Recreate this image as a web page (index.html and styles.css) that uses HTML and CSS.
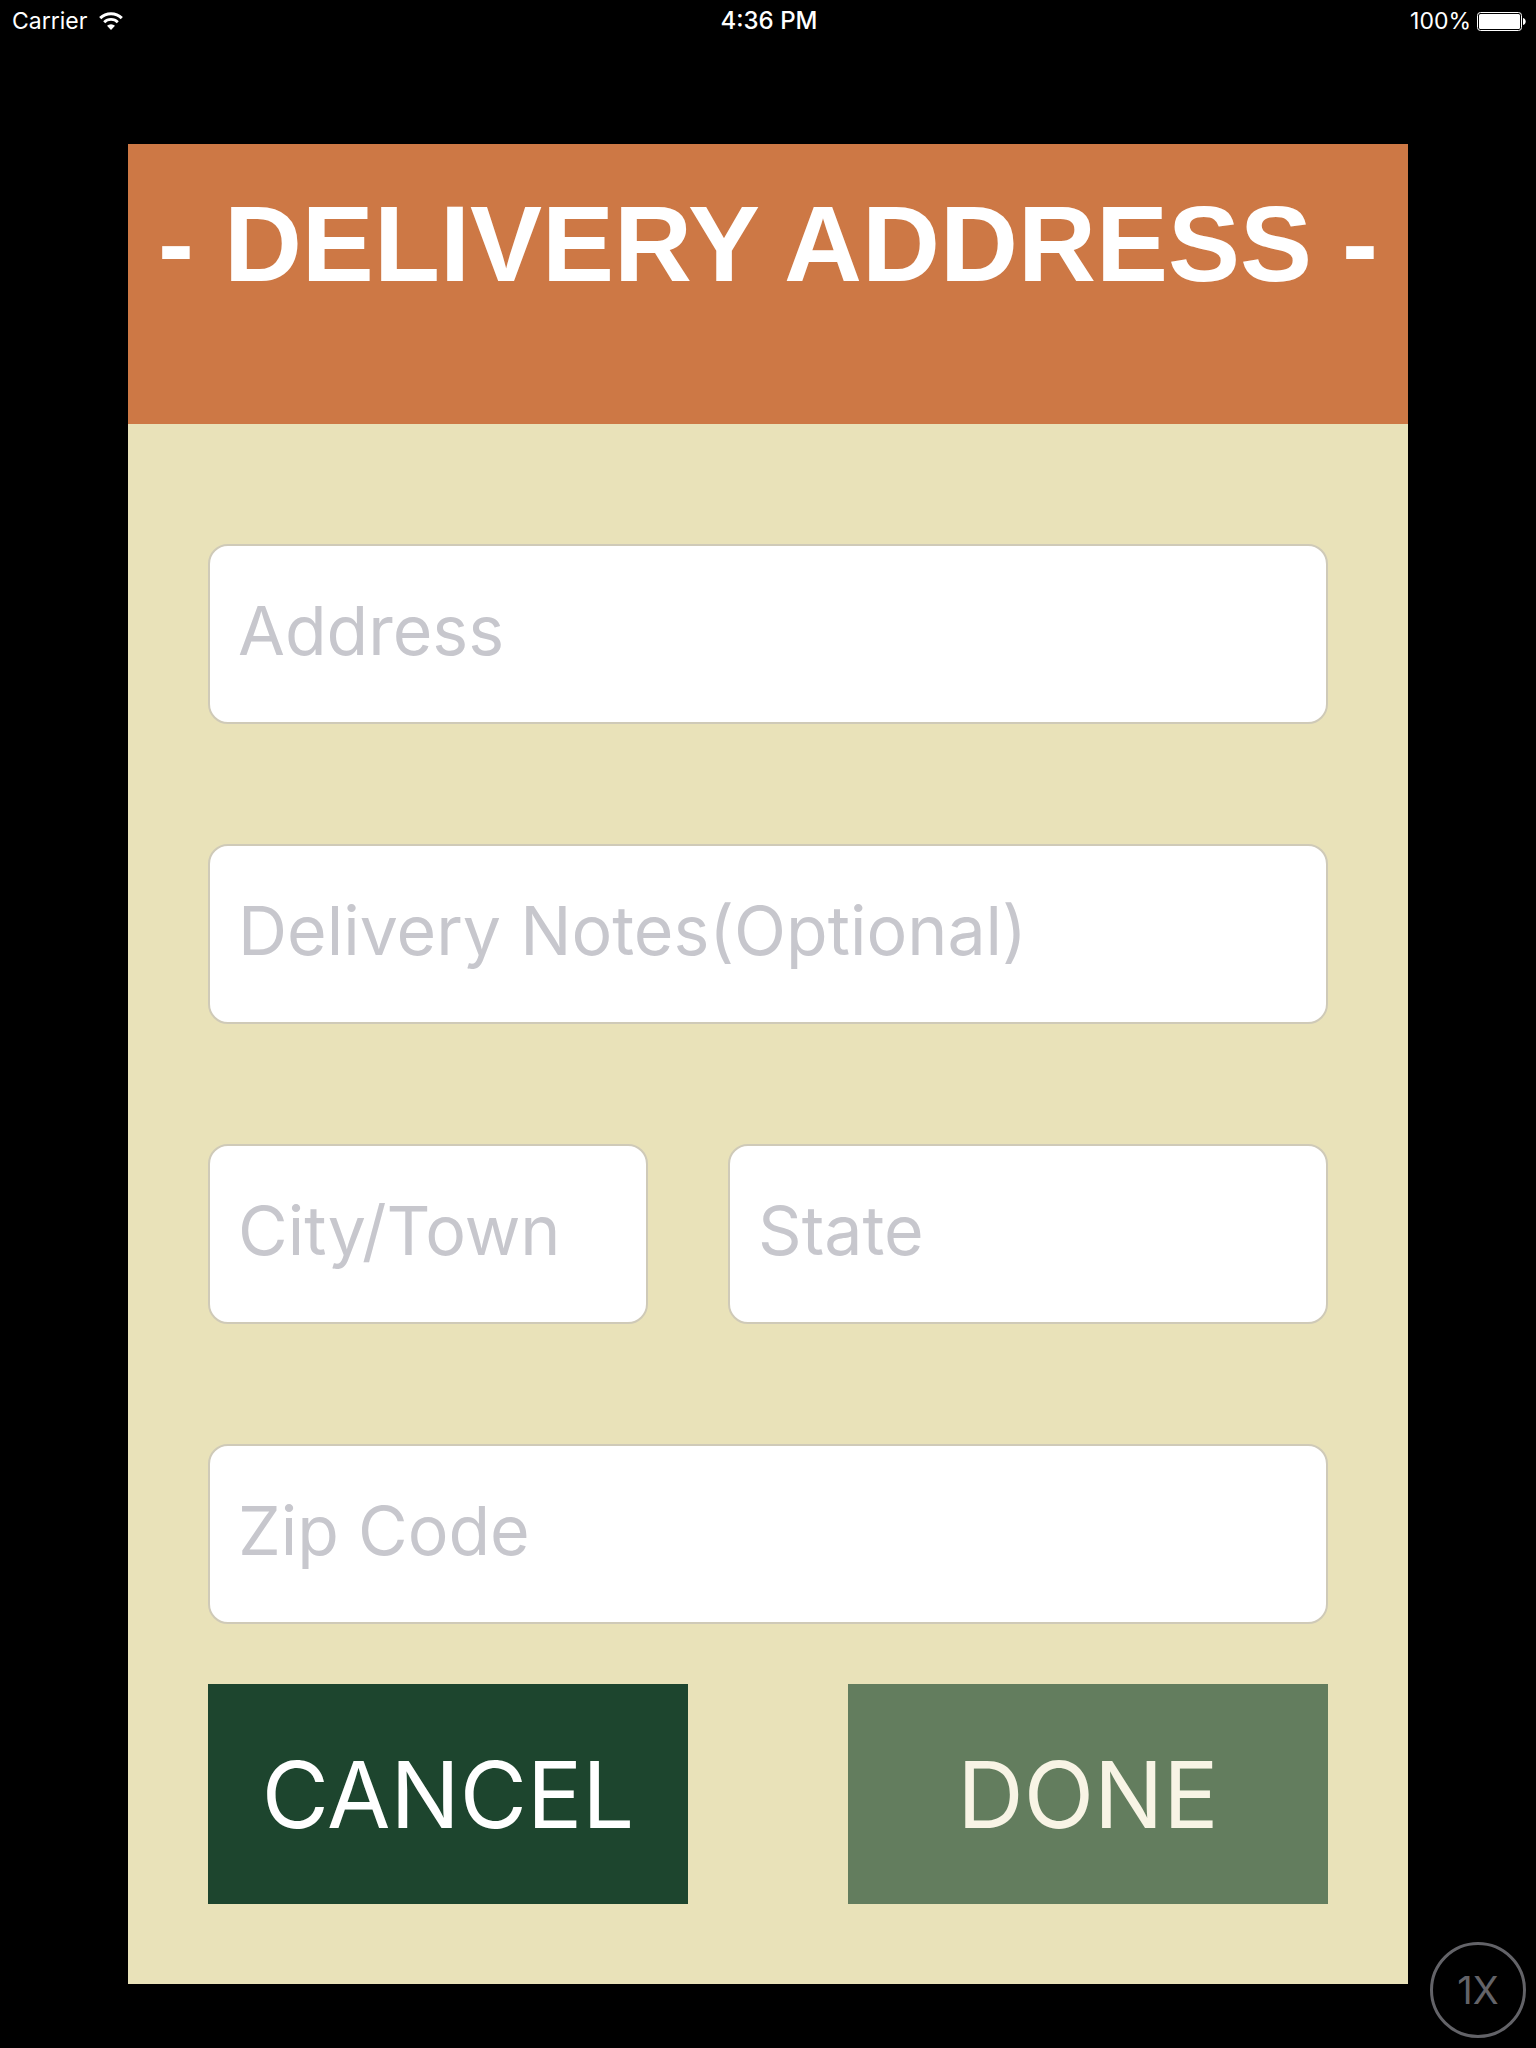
FILE: index.html
```html
<!DOCTYPE html>
<html lang="en">
<head>
<meta charset="utf-8">
<meta name="viewport" content="width=device-width, initial-scale=1">
<title>Delivery Address</title>
<link rel="stylesheet" href="styles.css">
</head>
<body>
<header class="status-bar">
  <div class="status-group">
    <span>Carrier</span>
    <svg class="wifi" viewBox="0 0 24 18" width="24" height="18" aria-hidden="true">
      <path d="M1.2 6.1a15.3 15.3 0 0 1 21.6 0" fill="none" stroke="currentColor" stroke-width="3"/>
      <path d="M5.2 10.2a9.6 9.6 0 0 1 13.6 0" fill="none" stroke="currentColor" stroke-width="2.8"/>
      <path d="M12 18 8 13.8a5.7 5.7 0 0 1 8 0Z" fill="currentColor"/>
    </svg>
  </div>
  <time class="clock">4:36 PM</time>
  <div class="status-group status-right">
    <span>100%</span>
    <svg class="battery" viewBox="0 0 49 19" width="49" height="19" aria-hidden="true">
      <rect x="0.5" y="0.5" width="44" height="18" rx="3" fill="none" stroke="currentColor"/>
      <rect x="2" y="2" width="41" height="15" rx="1.5" fill="currentColor"/>
      <path d="M46 6c3.600.8 3.600 6.200 0 7Z" fill="currentColor"/>
    </svg>
  </div>
</header>
<main class="card">
  <h1 class="card-title">- DELIVERY ADDRESS -</h1>
  <form class="address-form">
    <input class="field" type="text" name="address" aria-label="Address" placeholder="Address">
    <input class="field" type="text" name="notes" aria-label="Delivery Notes (Optional)" placeholder="Delivery Notes(Optional)">
    <div class="field-row">
      <input class="field" type="text" name="city" aria-label="City/Town" placeholder="City/Town">
      <input class="field" type="text" name="state" aria-label="State" placeholder="State">
    </div>
    <input class="field" type="text" name="zip" aria-label="Zip Code" placeholder="Zip Code">
    <div class="actions">
      <button class="button cancel" type="button">CANCEL</button>
      <button class="button done" type="submit">DONE</button>
    </div>
  </form>
</main>
<button class="scale-toggle" type="button">1X</button>
</body>
</html>
```
FILE: styles.css
```css
* {
  box-sizing: border-box;
}

body {
  position: relative;
  display: flow-root;
  margin: 0;
  min-height: 100vh;
  background: #000;
  color: #fff;
  font-family: Inter, "Liberation Sans", sans-serif;
}

.status-bar {
  display: grid;
  grid-template-columns: 1fr auto 1fr;
  align-items: center;
  height: 42px;
  padding: 0 10px 0 12px;
  font-size: 23px;
  line-height: 42px;
}

.status-group {
  display: flex;
  align-items: center;
  gap: 12px;
}

.status-right {
  justify-content: flex-end;
  gap: 6px;
}

.clock {
  font-size: 24px;
  font-weight: 500;
}

.card {
  margin: 102px 128px 64px;
  background: #e9e2b9;
}

.card-title {
  margin: 0;
  height: 280px;
  padding-top: 40px;
  background: #cd7845;
  font-family: "Liberation Sans", Arial, sans-serif;
  font-size: 108px;
  line-height: 120px;
  text-align: center;
  white-space: nowrap;
}

.address-form {
  display: flex;
  flex-direction: column;
  gap: 120px;
  padding: 120px 80px 80px;
}

.field {
  width: 100%;
  height: 180px;
  padding: 0 28px 8px;
  border: 2px solid #cfcab8;
  border-radius: 20px;
  background: #fff;
  color: #000;
  font: 400 68px Inter, "Liberation Sans", sans-serif;
}

.field::placeholder {
  color: #c7c7cd;
  opacity: 1;
}

.field-row {
  display: grid;
  grid-template-columns: 11fr 15fr;
  gap: 80px;
}

.actions {
  display: grid;
  grid-template-columns: 1fr 1fr;
  gap: 160px;
  margin-top: -60px;
}

.button {
  height: 220px;
  padding: 0;
  border: 0;
  border-radius: 0;
  font: 400 92px Inter, "Liberation Sans", sans-serif;
}

.cancel {
  background: #1d452e;
  color: #fff;
}

.done {
  background: #637d5e;
  color: #f8f4e5;
}

.scale-toggle {
  position: absolute;
  right: 10px;
  bottom: 10px;
  width: 96px;
  height: 96px;
  padding: 0;
  border: 3px solid #636368;
  border-radius: 50%;
  background: transparent;
  color: #636368;
  font: 400 38px Inter, "Liberation Sans", sans-serif;
}
```
